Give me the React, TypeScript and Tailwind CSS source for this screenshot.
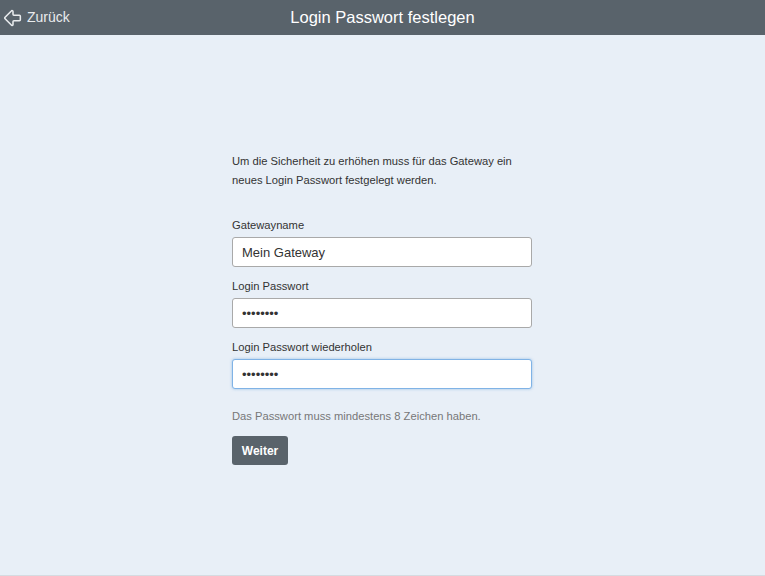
import { ArrowBigLeft } from "lucide-react";

function Field({
  label,
  value,
  type = "text",
  focused = false,
}: {
  label: string;
  value: string;
  type?: string;
  focused?: boolean;
}) {
  return (
    <div className="mb-[10px]">
      <label className="block text-[11.2px] leading-[18px] text-[#333] mb-[3px]">{label}</label>
      <input
        type={type}
        defaultValue={value}
        className={`block w-[300px] h-[30px] rounded-[3px] bg-white px-[9px] text-[13px] text-[#333] outline-none ${
          focused
            ? "border border-[#80b3e6] shadow-[0_0_3px_rgba(100,160,220,0.6)]"
            : "border border-[#a9a9a9]"
        }`}
      />
    </div>
  );
}

export default function App() {
  return (
    <div className="h-[576px] flex flex-col bg-[#e8eff7] font-['Liberation_Sans',Arial,sans-serif] border-b border-[#d5dbe1]">
      <header className="relative h-[35px] shrink-0 bg-[#59636b] flex items-center justify-center">
        <button className="absolute left-[2px] top-0 h-[35px] flex items-center gap-[3px] text-[14px] text-[#e9ecee]">
          <ArrowBigLeft size={22} strokeWidth={1.7} />
          <span>Zurück</span>
        </button>
        <h1 className="text-[16.5px] text-white">Login Passwort festlegen</h1>
      </header>

      <main className="flex justify-center pt-[117px] pr-px">
        <div className="w-[300px]">
          <p className="text-[11.2px] leading-[19px] text-[#333]">
            Um die Sicherheit zu erhöhen muss für das Gateway ein neues Login Passwort festgelegt werden.
          </p>
          <div className="mt-[26px]">
            <Field label="Gatewayname" value="Mein Gateway" />
            <Field label="Login Passwort" value="password" type="password" />
            <Field label="Login Passwort wiederholen" value="password" type="password" focused />
          </div>
          <p className="mt-[18px] text-[11.2px] leading-[18px] text-[#777]">
            Das Passwort muss mindestens 8 Zeichen haben.
          </p>
          <button className="mt-[11px] h-[29px] w-[56px] rounded-[3px] bg-[#59636b] text-[12px] font-bold text-white">
            Weiter
          </button>
        </div>
      </main>
    </div>
  );
}
